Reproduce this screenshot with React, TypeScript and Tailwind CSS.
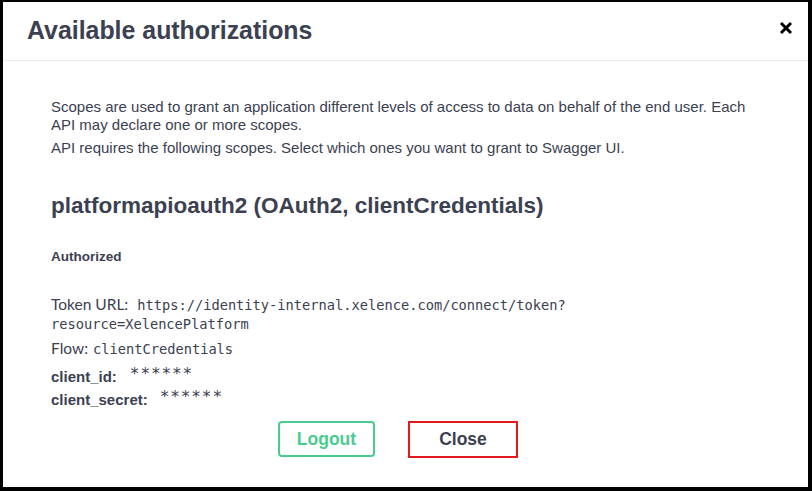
export default function App() {
  return (
    <div className="w-[812px] h-[491px] bg-black pl-[3px] pt-[2px] pr-[4px] pb-[4px] font-['Liberation_Sans',Arial,sans-serif] text-[#3b4151]">
      <div className="w-full h-full bg-white flex flex-col">
        {/* Header */}
        <div className="flex items-center justify-between h-[59px] border-b border-[#ebebeb] pl-[24px] pr-[15px] pb-[2px]">
          <h3 className="text-[24.9px] font-bold leading-[30px]">Available authorizations</h3>
          <button className="text-black -mt-[4px]">
            <svg width="14" height="14" viewBox="0 0 14 14">
              <path d="M2 2 L12 12 M12 2 L2 12" stroke="black" strokeWidth="3" />
            </svg>
          </button>
        </div>

        {/* Body */}
        <div className="pl-[48px] pr-[20px] pt-[37px]">
          <p className="text-[15px] leading-[18px] w-[700px]">
            Scopes are used to grant an application different levels of access to data on behalf of the end user. Each API may declare one or more scopes.
          </p>
          <p className="text-[15px] leading-[18px] mt-[5px]">
            API requires the following scopes. Select which ones you want to grant to Swagger UI.
          </p>

          <h4 className="text-[22.5px] font-bold mt-[35px] leading-[28px]">
            platformapioauth2 (OAuth2, clientCredentials)
          </h4>

          <h6 className="text-[13.5px] font-bold mt-[29px] leading-[16px]">Authorized</h6>

          <div className="mt-[30px] text-[15px] leading-[19px]">
            <div className="flex items-baseline">
              <span className="font-['Lato',sans-serif] text-[15.5px]">Token URL:</span>
              <code className="ml-[9px] font-['DejaVu_Sans_Mono',monospace] text-[13.7px] leading-[19px]">
                https://identity-internal.xelence.com/connect/token?
              </code>
            </div>
            <code className="block font-['DejaVu_Sans_Mono',monospace] text-[13.7px] leading-[19px]">
              resource=XelencePlatform
            </code>
            <div className="mt-[5px] flex items-baseline">
              <span className="font-['Lato',sans-serif] text-[15.5px]">Flow:</span>
              <code className="ml-[5px] font-['DejaVu_Sans_Mono',monospace] text-[13.7px] leading-[19px]">clientCredentials</code>
            </div>
            <div className="mt-[8px] flex items-start gap-[13px] h-[19px]">
              <span className="font-bold">client_id:</span>
              <code className="font-['DejaVu_Sans_Mono',monospace] text-[16px] tracking-[0.9px] leading-[14px] text-[#3b4151]">******</code>
            </div>
            <div className="mt-[4px] flex items-start gap-[12px] h-[19px]">
              <span className="font-bold">client_secret:</span>
              <code className="font-['DejaVu_Sans_Mono',monospace] text-[16px] tracking-[0.9px] leading-[14px] text-[#3b4151]">******</code>
            </div>
          </div>
        </div>

        {/* Buttons */}
        <div className="flex justify-center gap-[33px] mt-[12px] pr-[15px]">
          <button className="w-[97px] h-[36px] border-2 border-[#49cc90] rounded-[4px] text-[#49cc90] font-bold text-[17.5px]">
            Logout
          </button>
          <button className="w-[110px] h-[37px] border-2 border-[#e3191f] text-[#3b4151] font-bold text-[17.5px]">
            Close
          </button>
        </div>
      </div>
    </div>
  );
}
